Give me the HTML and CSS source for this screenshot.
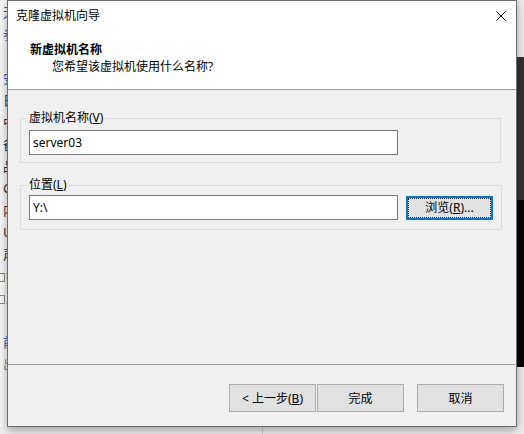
FILE: index.html
```html
<!DOCTYPE html>
<html>
	<head>
		<meta charset="UTF-8">
		<title>克隆虚拟机向导</title>
		<link rel="stylesheet" href="styles.css">
	</head>
	<body>
		<div class="desk">
			<div class="back-list">
				<p class="blue">天</p>
				<p class="blue">参</p>
				<p></p>
				<p class="blue">安</p>
				<p>日</p>
				<p>中</p>
				<p>备</p>
				<p>品</p>
				<p>C</p>
				<p>内</p>
				<p>U</p>
				<p>声</p>
				<p><i class="box"></i>打</p>
				<p><i class="box"></i>显</p>
				<p></p>
				<p class="blue">前</p>
				<p class="grey">出</p>
			</div>
			<div class="back-dark"></div>
			<div class="back-rule"></div>
		</div>

		<div class="wizard">
			<div class="head">
				<div class="titlebar">
					<span class="title">克隆虚拟机向导</span>
					<svg class="close" width="10" height="10" viewBox="0 0 10 10">
						<path d="M0.5 0.5L9.5 9.5M9.5 0.5L0.5 9.5" stroke="#000" stroke-width="1" fill="none"/>
					</svg>
				</div>
				<div class="intro">
					<h1>新虚拟机名称</h1>
					<p>您希望该虚拟机使用什么名称?</p>
				</div>
			</div>

			<div class="content">
				<fieldset class="group group-name">
					<legend>虚拟机名称(<u>V</u>)</legend>
					<input class="field" type="text" value="server03">
				</fieldset>
				<fieldset class="group group-path">
					<legend>位置(<u>L</u>)</legend>
					<div class="row">
						<input class="field" type="text" value="Y:\">
						<button class="btn btn-focus"><span>浏览(<u>R</u>)...</span></button>
					</div>
				</fieldset>
			</div>

			<div class="footer">
				<button class="btn">&lt; 上一步(<u>B</u>)</button>
				<button class="btn">完成</button>
				<button class="btn btn-cancel">取消</button>
			</div>
		</div>
	</body>
</html>
```

FILE: styles.css
```css
*{margin:0;padding:0;box-sizing:border-box;}
html,body{width:524px;height:434px;overflow:hidden;}
body{
	position:relative;background:#eeeeee;color:#000;
	font-family:"Noto Sans","Noto Sans CJK SC",sans-serif;font-size:12px;
}

/* windows behind the dialog */
.desk{position:absolute;left:0;top:0;width:524px;height:434px;}
.back-list{position:absolute;left:0;top:1px;width:7px;height:426px;overflow:hidden;background:#f8f8f8;padding-left:3px;}
.back-list p{height:22px;line-height:22px;font-size:13px;white-space:nowrap;color:#333;}
.back-list .blue{color:#2a5fb8;}
.back-list .grey{color:#8a8a8a;}
.back-list .box{display:inline-block;width:9px;height:9px;border:1px solid #8a8a8a;margin-left:-7px;margin-right:1px;vertical-align:-1px;}
.back-dark{position:absolute;left:517px;top:57px;width:7px;height:310px;background:linear-gradient(#323232 0,#323232 143px,#050505 143px);}
.back-rule{position:absolute;left:262px;top:420px;width:1px;height:14px;background:#cfcfcf;}

/* dialog */
.wizard{
	position:absolute;left:7px;top:0;width:510px;height:427px;
	border:1px solid #6e6e6e;background:#f0f0f0;
	display:flex;flex-direction:column;
	box-shadow:0 3px 9px rgba(0,0,0,.35);
}
.head{height:89px;background:#fff;border-bottom:1px solid #a0a0a0;}
.titlebar{height:30px;display:flex;align-items:center;padding-left:8px;padding-right:10px;}
.title{line-height:16px;}
.close{margin-left:auto;display:block;}
.intro{padding-left:22px;}
.intro h1{font-size:12px;font-weight:bold;line-height:16px;margin-top:11px;}
.intro p{line-height:16px;margin-top:1px;padding-left:22px;}

.content{height:274px;padding:21px 15px 0 12px;}
.group{border:1px solid #dcdcdc;padding:5px 8px 7px 8px;}
.group legend{line-height:14px;padding:0 2px;margin-left:-2px;}
.group-path{margin-top:15px;padding-top:3px;padding-bottom:9px;}
.row{display:flex;align-items:flex-start;}
.field{
	width:369px;height:25px;border:1px solid #7a7a7a;background:#fff;
	padding:0 3px;font:inherit;color:#000;outline:none;
}

.btn{
	width:87px;height:28px;background:#e1e1e1;border:1px solid #adadad;
	font:inherit;color:#000;
}
.btn-focus{
	height:24px;margin-left:8px;margin-top:1px;border:2px solid #0078d7;padding:0;
}
.btn-focus span{
	display:block;height:100%;line-height:18px;border:1px dotted #222;
}

.footer{
	flex:1;border-top:1px solid #a0a0a0;
	display:flex;justify-content:flex-end;align-items:flex-start;
	gap:1px;padding:19px 12px 0 0;
}
.btn-cancel{margin-left:12px;}
u{text-decoration:underline;}
```
